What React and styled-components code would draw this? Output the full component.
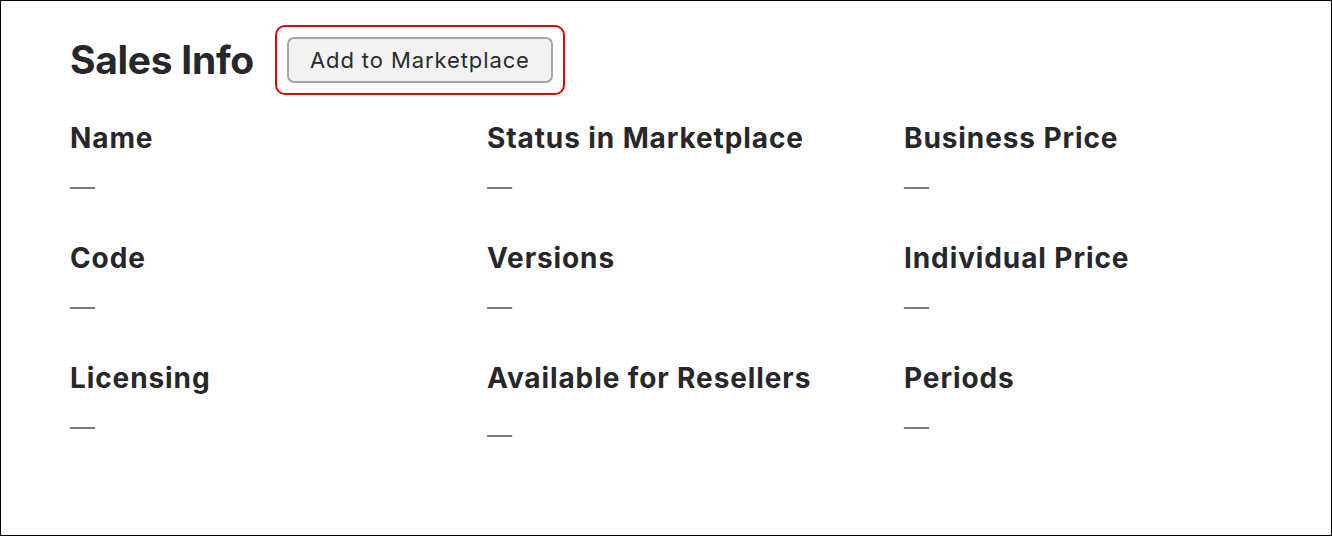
import React from 'react';
import styled, { createGlobalStyle } from 'styled-components';

const GlobalStyle = createGlobalStyle`
  html, body {
    margin: 0;
    padding: 0;
    background: #fff;
  }
  body {
    font-family: Inter, "Noto Sans", "Liberation Sans", sans-serif;
  }
`;

const Frame = styled.div`
  width: 1332px;
  height: 536px;
  box-sizing: border-box;
  border: 1px solid #000;
  padding: 24px 69px 0 69px;
  background: #fff;
`;

const Header = styled.div`
  display: flex;
  align-items: center;
  gap: 21px;
`;

const Title = styled.h1`
  margin: 0;
  font-size: 39px;
  font-weight: 700;
  color: #27272b;
  letter-spacing: -0.3px;
  line-height: 70px;
`;

const Highlight = styled.div`
  display: flex;
  padding: 10px;
  border: 2px solid #f10000;
  border-radius: 10px;
`;

const Button = styled.button`
  height: 46px;
  width: 266px;
  box-sizing: border-box;
  border: 2px solid #a5a5a5;
  border-radius: 7px;
  background: #f2f2f2;
  color: #2a2a2d;
  font-family: inherit;
  font-size: 22px;
  font-weight: 400;
  letter-spacing: 0.9px;
  padding: 0;
  cursor: pointer;
`;

const Grid = styled.div`
  display: grid;
  grid-template-columns: repeat(3, 356px);
  column-gap: 61px;
  row-gap: 39px;
  margin-top: 27px;
`;

const Field = styled.div`
  display: flex;
  flex-direction: column;
`;

const Label = styled.div`
  font-size: 28px;
  font-weight: 700;
  color: #27272b;
  letter-spacing: 0.9px;
  line-height: 32px;
  white-space: nowrap;
`;

const Value = styled.div`
  margin-top: ${(p) => 17 + (p.$shift || 0)}px;
  margin-bottom: ${(p) => -(p.$shift || 0)}px;
  font-size: 25px;
  line-height: 32px;
  color: #7b7b7b;
`;

const fields = [
  { label: 'Name' },
  { label: 'Status in Marketplace' },
  { label: 'Business Price' },
  { label: 'Code' },
  { label: 'Versions' },
  { label: 'Individual Price' },
  { label: 'Licensing' },
  { label: 'Available for Resellers', shift: 8 },
  { label: 'Periods' },
];

export default function App() {
  return (
    <>
      <GlobalStyle />
      <Frame>
        <Header>
          <Title>Sales Info</Title>
          <Highlight>
            <Button>Add to Marketplace</Button>
          </Highlight>
        </Header>
        <Grid>
          {fields.map((f) => (
            <Field key={f.label}>
              <Label>{f.label}</Label>
              <Value $shift={f.shift}>—</Value>
            </Field>
          ))}
        </Grid>
      </Frame>
    </>
  );
}
